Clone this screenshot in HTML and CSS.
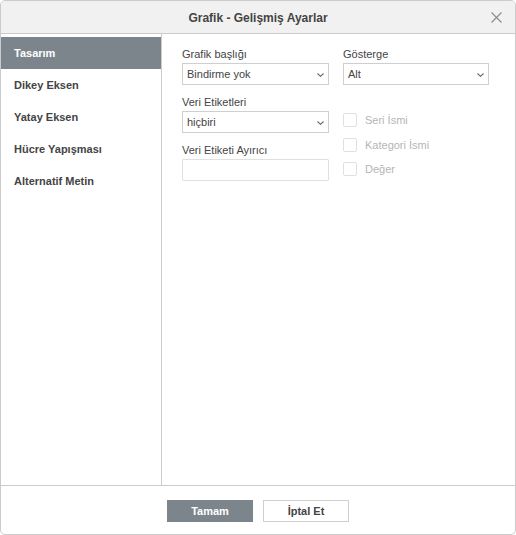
FILE: index.html
```html
<!DOCTYPE html>
<html lang="tr">
<head>
<meta charset="utf-8">
<title>Grafik - Gelişmiş Ayarlar</title>
<link rel="stylesheet" href="styles.css">
</head>
<body>
<div class="dialog">
  <div class="header">
    <span class="title">Grafik - Gelişmiş Ayarlar</span>
    <span class="close" aria-label="Kapat">
      <svg width="11" height="11" viewBox="0 0 11 11"><path d="M0.5 0.5 L10.5 10.5 M10.5 0.5 L0.5 10.5" stroke="#8a8a8a" stroke-width="1.1" fill="none"/></svg>
    </span>
  </div>
  <div class="body">
    <div class="sidebar">
      <div class="nav-item active">Tasarım</div>
      <div class="nav-item">Dikey Eksen</div>
      <div class="nav-item">Yatay Eksen</div>
      <div class="nav-item">Hücre Yapışması</div>
      <div class="nav-item">Alternatif Metin</div>
    </div>
    <div class="content">
      <div class="col">
        <div class="field">
          <div class="label">Grafik başlığı</div>
          <div class="select"><span>Bindirme yok</span><svg class="caret" width="7" height="4" viewBox="0 0 7 4"><path d="M0.5 0.5 L3.5 3.3 L6.5 0.5" stroke="#666" stroke-width="1.1" fill="none"/></svg></div>
        </div>
        <div class="field">
          <div class="label">Veri Etiketleri</div>
          <div class="select"><span>hiçbiri</span><svg class="caret" width="7" height="4" viewBox="0 0 7 4"><path d="M0.5 0.5 L3.5 3.3 L6.5 0.5" stroke="#666" stroke-width="1.1" fill="none"/></svg></div>
        </div>
        <div class="field">
          <div class="label">Veri Etiketi Ayırıcı</div>
          <div class="input"></div>
        </div>
      </div>
      <div class="col">
        <div class="field">
          <div class="label">Gösterge</div>
          <div class="select"><span>Alt</span><svg class="caret" width="7" height="4" viewBox="0 0 7 4"><path d="M0.5 0.5 L3.5 3.3 L6.5 0.5" stroke="#666" stroke-width="1.1" fill="none"/></svg></div>
        </div>
        <div class="checks">
          <div class="check"><span class="box"></span><span>Seri İsmi</span></div>
          <div class="check"><span class="box"></span><span>Kategori İsmi</span></div>
          <div class="check"><span class="box"></span><span>Değer</span></div>
        </div>
      </div>
    </div>
  </div>
  <div class="footer">
    <button class="btn primary">Tamam</button>
    <button class="btn">İptal Et</button>
  </div>
</div>
</body>
</html>
```

FILE: styles.css
```css
* { box-sizing: border-box; }
html, body { margin: 0; padding: 0; background: #fff; }
body {
  font-family: "Liberation Sans", Arial, sans-serif;
  font-size: 11px;
  color: #444;
}
.dialog {
  width: 516px;
  height: 535px;
  border: 1px solid #cbcbcb;
  border-radius: 5px;
  display: flex;
  flex-direction: column;
  overflow: hidden;
  background: #fff;
}
.header {
  height: 33px;
  flex: none;
  background: #f1f1f1;
  border-bottom: 1px solid #cbcbcb;
  display: flex;
  align-items: center;
  justify-content: center;
  position: relative;
}
.title {
  font-size: 12px;
  font-weight: bold;
  color: #444;
  line-height: 14px;
  padding-top: 1px;
}
.close {
  position: absolute;
  right: 13px;
  top: 11px;
  width: 11px;
  height: 11px;
  display: block;
}
.close svg { display: block; }
.body {
  flex: 1;
  display: flex;
  min-height: 0;
}
.sidebar {
  width: 161px;
  flex: none;
  border-right: 1px solid #cbcbcb;
  padding-top: 3px;
}
.nav-item {
  height: 32px;
  line-height: 32px;
  padding-left: 13px;
  font-weight: bold;
  font-size: 11px;
  color: #444;
}
.nav-item.active {
  background: #7d858c;
  color: #fff;
}
.content {
  flex: 1;
  padding: 13px 0 0 20px;
  display: flex;
  gap: 14px;
}
.col {
  width: 147px;
  display: flex;
  flex-direction: column;
}
.col + .col { width: 146px; }
.field { margin-bottom: 10px; }
.label {
  line-height: 14px;
  height: 14px;
  margin-bottom: 2px;
}
.select, .input {
  height: 22px;
  border: 1px solid #cfcfcf;
  background: #fff;
}
.input {
  border-color: #e0e0e0;
  border-radius: 1px;
}
.select {
  display: flex;
  align-items: center;
  justify-content: space-between;
  padding: 0 4px 0 4px;
  color: #444;
}
.caret { display: block; margin-top: 1px; }
.checks {
  margin-top: 18px;
  display: flex;
  flex-direction: column;
  gap: 10.5px;
}
.check {
  display: flex;
  align-items: center;
  gap: 8px;
  color: #b5b5b5;
  height: 14px;
  line-height: 14px;
}
.box {
  width: 14px;
  height: 14px;
  border: 1px solid #e0e0e0;
  border-radius: 2px;
  background: #fff;
  flex: none;
}
.footer {
  height: 49px;
  flex: none;
  border-top: 1px solid #cbcbcb;
  display: flex;
  justify-content: center;
  align-items: flex-start;
  padding-top: 14px;
  gap: 10px;
}
.btn {
  width: 86px;
  height: 22px;
  border: 1px solid #cfcfcf;
  background: #fff;
  color: #444;
  font-family: "Liberation Sans", Arial, sans-serif;
  font-size: 11px;
  font-weight: bold;
  padding: 0;
  margin: 0;
}
.btn.primary {
  background: #7d858c;
  border-color: #7d858c;
  color: #fff;
}
```
